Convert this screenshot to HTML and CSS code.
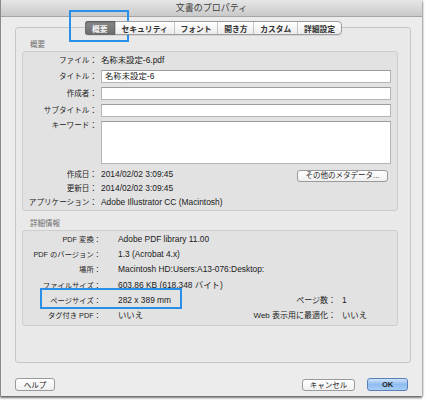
FILE: index.html
```html
<!DOCTYPE html>
<html lang="ja">
<head>
<meta charset="utf-8">
<title>文書のプロパティ</title>
<link rel="stylesheet" href="styles.css">
</head>
<body>
<div class="window">
  <div class="titlebar">文書のプロパティ</div>
  <div class="content">
    <div class="tabs">
      <span class="tab selected">概要</span>
      <span class="tab">セキュリティ</span>
      <span class="tab">フォント</span>
      <span class="tab">開き方</span>
      <span class="tab">カスタム</span>
      <span class="tab">詳細設定</span>
    </div>
    <div class="panel">
      <div class="section-title">概要</div>
      <div class="group summary">
        <div class="label">ファイル：</div><div class="value">名称未設定-6.pdf</div>
        <div class="label">タイトル：</div><div class="value"><div class="input">名称未設定-6</div></div>
        <div class="label">作成者：</div><div class="value"><div class="input"></div></div>
        <div class="label">サブタイトル：</div><div class="value"><div class="input"></div></div>
        <div class="label top">キーワード：</div><div class="value top"><div class="textarea"></div></div>
        <div class="label">作成日：</div><div class="value split"><span>2014/02/02 3:09:45</span><span class="button meta">その他のメタデータ...</span></div>
        <div class="label">更新日：</div><div class="value">2014/02/02 3:09:45</div>
        <div class="label">アプリケーション：</div><div class="value">Adobe Illustrator CC (Macintosh)</div>
      </div>
      <div class="section-title">詳細情報</div>
      <div class="group details">
        <div class="label">PDF 変換：</div><div class="value wide">Adobe PDF library 11.00</div>
        <div class="label">PDF のバージョン：</div><div class="value wide">1.3 (Acrobat 4.x)</div>
        <div class="label">場所：</div><div class="value wide">Macintosh HD:Users:A13-076:Desktop:</div>
        <div class="label">ファイルサイズ：</div><div class="value wide">603.86 KB (618,348 バイト)</div>
        <div class="label">ページサイズ：</div><div class="value">282 x 389 mm</div><div class="label right">ページ数：</div><div class="value end">1</div>
        <div class="label">タグ付き PDF：</div><div class="value">いいえ</div><div class="label right">Web 表示用に最適化：</div><div class="value end">いいえ</div>
      </div>
    </div>
    <div class="footer">
      <span class="button help">ヘルプ</span>
      <span class="spacer"></span>
      <span class="button cancel">キャンセル</span>
      <span class="button ok">OK</span>
    </div>
  </div>
  <div class="mark mark-tab"></div>
  <div class="mark mark-size"></div>
</div>
</body>
</html>
```
FILE: styles.css
```css
html, body {
  margin: 0;
  padding: 0;
  background: #ffffff;
}
body {
  width: 430px;
  height: 403px;
  overflow: hidden;
  font-family: "Liberation Sans", "Noto Sans CJK JP", sans-serif;
  font-size: 8px;
  color: #2b2b2b;
}
.window {
  position: relative;
  width: 422px;
  height: 396px;
  background: #ececec;
  border-left: 1px solid #8a8a8a;
  box-sizing: border-box;
  box-shadow: 0 2px 2px rgba(0,0,0,0.55), 1px 0 2px rgba(0,0,0,0.25);
  display: flex;
  flex-direction: column;
}
.titlebar {
  height: 16px;
  border-bottom: 1px solid #a5a5a5;
  background: linear-gradient(#e6e6e6, #c9c9c9);
  text-align: center;
  line-height: 16px;
  font-size: 9px;
  color: #3c3c3c;
}
.content {
  flex: 1;
  display: flex;
  flex-direction: column;
  padding: 4px 11px 5px 14px;
}
.tabs {
  position: relative;
  z-index: 1;
  align-self: center;
  display: flex;
  height: 14px;
  box-sizing: border-box;
  border: 1px solid #9c9c9c;
  border-radius: 4px;
  background: linear-gradient(#ffffff, #ececec);
  box-shadow: 0 1px 0 rgba(0,0,0,0.08);
  margin-left: 1px;
}
.tab {
  display: flex;
  align-items: center;
  justify-content: center;
  padding: 0 5.8px;
  font-size: 7.8px;
  font-weight: bold;
  color: #333;
  border-left: 1px solid #c4c4c4;
}
.tab:first-child { border-left: none; }
.tab.selected {
  background: linear-gradient(#8a8a8a, #6b6b6b);
  color: #f4f4f4;
  border-radius: 3px 0 0 3px;
  padding: 0 7px;
  margin: -1px 0 -1px -1px;
  box-shadow: inset 0 1px 2px rgba(0,0,0,0.4);
}
.panel {
  margin-top: -8px;
  height: 336px;
  box-sizing: border-box;
  border: 1px solid #c6c6c6;
  border-radius: 3px;
  background: #e9e9e9;
  padding: 11px 12px 0 6px;
}
.section-title {
  font-size: 7.5px;
  color: #6e6e6e;
  height: 12px;
  line-height: 12px;
  padding-left: 8px;
}
.group {
  border: 1px solid #cdcdcd;
  border-radius: 3px;
  background: #e2e2e2;
  box-sizing: border-box;
}
.summary {
  display: grid;
  grid-template-columns: 74px 1fr;
  grid-template-rows: 15px 17px 17px 17px 48px 14px 14px 14px;
  column-gap: 4px;
  padding: 1px 6px 1px 0;
  height: 160px;
}
.label {
  text-align: right;
  align-self: center;
  white-space: nowrap;
  color: #222;
  font-size: 7.6px;
  line-height: 11px;
}
.value {
  align-self: center;
  white-space: nowrap;
  font-size: 8.4px;
  line-height: 11px;
  color: #1a1a1a;
}
.label.top { align-self: start; margin-top: 1px; }
.value.top { align-self: start; margin-top: 2px; }
.input {
  height: 13px;
  box-sizing: border-box;
  border: 1px solid #b5b5b5;
  border-top-color: #9c9c9c;
  background: #fff;
  padding-left: 3px;
  line-height: 11px;
}
.textarea {
  height: 43px;
  box-sizing: border-box;
  border: 1px solid #b5b5b5;
  border-top-color: #9c9c9c;
  background: #fff;
}
.split {
  display: flex;
  justify-content: space-between;
  align-items: center;
}
.button {
  display: inline-flex;
  align-items: center;
  justify-content: center;
  height: 12px;
  box-sizing: border-box;
  border: 1px solid #9a9a9a;
  border-radius: 3px;
  background: linear-gradient(#ffffff, #f0f0f0);
  font-size: 7.5px;
  color: #222;
  white-space: nowrap;
}
.meta {
  width: 91px;
  margin-right: 3px;
  margin-top: 3px;
}
.details {
  height: 96px;
  display: grid;
  grid-template-columns: 78px 150px 91px 1fr;
  grid-auto-rows: 15.2px;
  padding: 1px 0 0 0;
}
.details .label { font-size: 7.3px; }
.details .value { padding-left: 17px; }
.details .value.wide { grid-column: 2 / 5; }
.details .label.right {
  font-size: 8px;
  padding-right: 6px;
}
.details .value.end { padding-left: 0; }
.summary + .section-title { margin-top: 7px; }
.footer {
  margin-top: 15px;
  display: flex;
  align-items: center;
  height: 13px;
}
.spacer { flex: 1; }
.help { width: 40px; height: 13px; }
.cancel { width: 53px; margin-right: 12px; }
.ok {
  width: 41px;
  height: 13px;
  margin-right: 3px;
  border-color: #5a7fb8;
  background: linear-gradient(#cfe3fb, #8fbdf1 50%, #a9cdf6);
  font-weight: bold;
}
.mark {
  position: absolute;
  border: 2px solid #2a8fe8;
  box-sizing: border-box;
}
.mark-tab {
  left: 68px;
  top: 10px;
  width: 60px;
  height: 32px;
}
.mark-size {
  left: 39px;
  top: 288px;
  width: 142px;
  height: 21px;
}
```
